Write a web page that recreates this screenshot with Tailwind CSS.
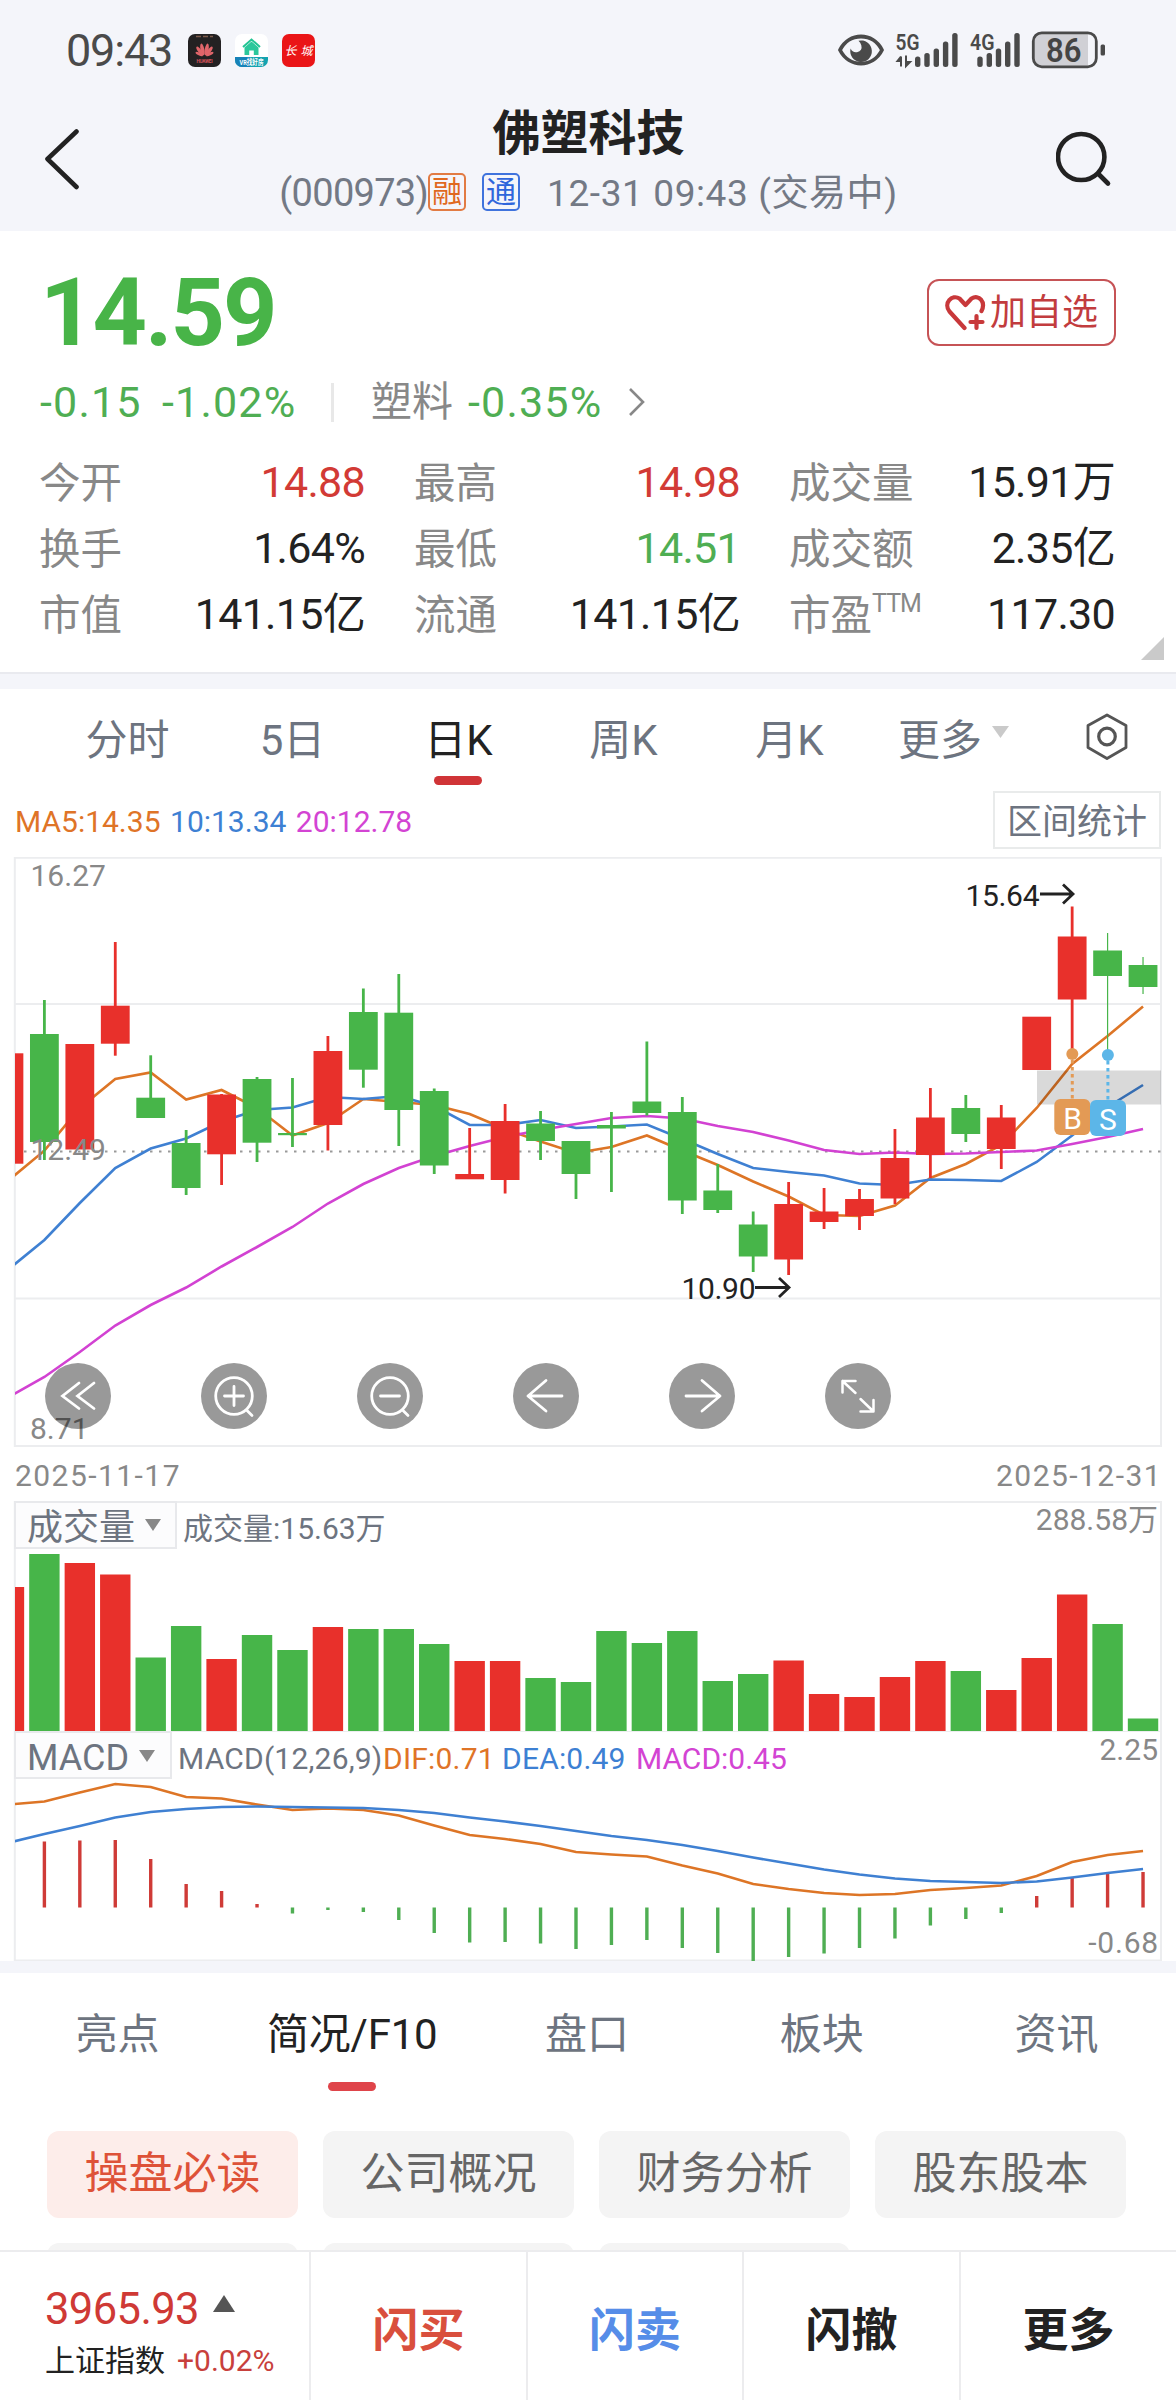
<!DOCTYPE html>
<html lang="zh-CN">
<head>
<meta charset="utf-8">
<title>佛塑科技 000973</title>
<script src="https://cdn.jsdelivr.net/npm/@tailwindcss/browser@4"></script>
</head>
<body class="bg-white">
<div class="w-[1176px] h-[2400px] overflow-hidden flex flex-col bg-white font-[Roboto,'Noto_Sans_CJK_SC',sans-serif] text-[#222] leading-none whitespace-nowrap">

  <!-- Status bar and title -->
  <header class="h-[231px] shrink-0 bg-[#f4f5fa] flex flex-col">
    <div class="h-[100px] flex items-center justify-between pl-[66px] pr-[70px]">
      <div class="flex items-center">
        <span class="w-[122px] text-[45px] tracking-[-1.2px] text-[#4a4a4a]">09:43</span>
        <svg class="w-[127px] h-[33px]" viewBox="0 0 127 33">
          <rect width="33" height="33" rx="7" fill="#232122"/>
          <path d="M8 2.5h17" stroke="#7d5b4b" stroke-width="1.4" stroke-dasharray="5 2"/>
          <g fill="#e0656a">
            <ellipse cx="14.4" cy="15.5" rx="1.9" ry="6" transform="rotate(-12 14.4 15.5)"/><ellipse cx="18.6" cy="15.5" rx="1.9" ry="6" transform="rotate(12 18.6 15.5)"/>
            <ellipse cx="11.8" cy="17" rx="1.7" ry="5.4" transform="rotate(-36 11.8 17)"/><ellipse cx="21.2" cy="17" rx="1.7" ry="5.4" transform="rotate(36 21.2 17)"/>
            <ellipse cx="11.2" cy="20" rx="1.4" ry="4" transform="rotate(-64 11.2 20)"/><ellipse cx="21.8" cy="20" rx="1.4" ry="4" transform="rotate(64 21.8 20)"/>
          </g>
          <text x="8.5" y="28.5" font-size="4.6" font-weight="700" textLength="16" fill="#d8555c">HUAWEI</text>
          <g transform="translate(47 0)">
            <rect width="33" height="33" rx="7" fill="#fff"/>
            <path d="M0 23h33v3a7 7 0 0 1-7 7H7a7 7 0 0 1-7-7z" fill="#14a3b0"/>
            <path d="M0 23h15v10H7a7 7 0 0 1-7-7z" fill="#1782b8"/>
            <path d="M8 13l8.500-7.500L25 13" fill="none" stroke="#22c493" stroke-width="2"/>
            <path d="M9.500 13.500l7-6 7 6V21h-4.700v-4.500h-4.600V21H9.500z" fill="#2cc79b"/>
            <text x="4.500" y="31" font-size="7.500" font-weight="700" textLength="24" lengthAdjust="spacingAndGlyphs" fill="#fff">VR找好房</text>
          </g>
          <g transform="translate(94 0)">
            <rect width="33" height="33" rx="7" fill="#ea1517"/>
            <text x="2.500" y="20.500" font-size="12" font-weight="400" font-style="italic" textLength="28" fill="#fff">长城</text>
          </g>
        </svg>
      </div>
      <svg class="w-[268px] h-[40px]" viewBox="838 29.500 268 40" fill="none">
        <g fill="#4a4a4a">
          <path d="M840 49.500C849 31.500 873 31.500 882 49.500C873 67.500 849 67.500 840 49.500Z" fill="none" stroke="#4a4a4a" stroke-width="3.800" stroke-linejoin="round"/>
          <path d="M858.500 40.200A10.800 10.800 0 1 1 850.600 48q2 4.500 6.400 3.700q5.800-1.700 4.300-7q-.8-3-2.800-4.500z"/>
          <text x="895.500" y="49" font-size="22" font-weight="600" textLength="24" lengthAdjust="spacingAndGlyphs">5G</text>
          <path d="M901 56v10M901 56l-3.500 4.500h3.500M906 55v10.500l4-4h-4" stroke="#4a4a4a" stroke-width="2"/>
          <rect x="915" y="56" width="5.400" height="10.500" rx="2.500"/><rect x="924.300" y="52.500" width="5.400" height="14" rx="2.500"/><rect x="933.600" y="48" width="5.400" height="18.500" rx="2.500"/><rect x="942.900" y="41" width="5.400" height="25.500" rx="2.500"/><rect x="952.200" y="32.500" width="5.400" height="34" rx="2.500"/>
          <text x="970" y="49" font-size="22" font-weight="600" textLength="24.500" lengthAdjust="spacingAndGlyphs">4G</text>
          <rect x="977.300" y="56" width="5.400" height="10.500" rx="2.500"/><rect x="986.600" y="52.500" width="5.400" height="14" rx="2.500"/><rect x="995.800" y="48" width="5.400" height="18.500" rx="2.500"/><rect x="1005" y="41" width="5.400" height="25.500" rx="2.500"/><rect x="1014.300" y="32.500" width="5.400" height="34" rx="2.500"/>
        </g>
        <path d="M1041 32h47v35h-47a8 8 0 0 1-8-8V40a8 8 0 0 1 8-8z" fill="#d0d0d5"/>
        <rect x="1033.300" y="32.300" width="63" height="34" rx="8.500" stroke="#4a4a4a" stroke-width="2.800"/>
        <rect x="1100.600" y="44" width="4.400" height="11" rx="1.500" fill="#4a4a4a"/>
        <text x="1046" y="61" font-size="33" font-weight="600" textLength="35.500" lengthAdjust="spacingAndGlyphs" fill="#444">86</text>
      </svg>
    </div>
    <div class="h-[131px] flex justify-between pl-[44px] pr-[64px]">
      <svg class="w-[36px] h-[62px] mt-[28px]" viewBox="44 128 36 62" fill="none" stroke="#222" stroke-width="4.600" stroke-linecap="round" stroke-linejoin="round"><path d="M76.500 131.500L47.500 159l29 28"/></svg>
      <div class="flex flex-col items-center ml-[41px]">
        <h1 class="mt-[9px] h-[54px] text-[48px] font-bold leading-[50px]">佛塑科技</h1>
        <div class="flex items-center h-[60px] text-[37px] text-[#737985]">
          <span class="text-[38px] tracking-[-0.700px]">(000973)</span>
          <span class="w-[38px] h-[38px] mb-[2px] border-2 border-[#e27b43] rounded-[5px] text-[#e0691f] text-[30px] leading-[34px] flex justify-center">融</span>
          <span class="w-[38px] h-[38px] mb-[2px] ml-[16px] border-2 border-[#3f73dd] rounded-[5px] text-[#2f66dc] text-[30px] leading-[34px] flex justify-center">通</span>
          <span class="ml-[27px] tracking-[0.600px]">12-31 09:43 (交易中)</span>
        </div>
      </div>
      <svg class="w-[56px] h-[60px] mt-[28px]" viewBox="1056 128 56 60" fill="none" stroke="#222" stroke-width="4.600" stroke-linecap="round"><ellipse cx="1081.200" cy="157" rx="23.200" ry="23"/><path d="M1098.500 174l9.500 9.500"/></svg>
    </div>
  </header>

  <!-- Quote -->
  <section class="relative h-[441px] shrink-0 pl-[40px] pr-[60px]">
    <div class="h-[136px] flex items-center justify-between">
      <div class="text-[95px] font-bold text-[#48b448] tracking-[-2px] mt-[26px]">14.59</div>
      <div class="w-[189px] h-[67px] mt-[27px] border-2 border-[#c65356] rounded-[12px] flex items-center pl-[15px] text-[36px] text-[#c23c3e]">
        <svg class="w-[42px] h-[37px]" viewBox="0 0 42 37" fill="none" stroke="#c8383a" stroke-width="4.200" stroke-linecap="round" stroke-linejoin="round"><path d="M20.500 34L5.500 17.500C-1 9 8 0 15.500 4.500L21.500 11L27.500 4.500C35 0 42 8 37.500 17"/><path d="M32.500 22v12M26.500 28h12"/></svg>
        <span class="ml-[4px]">加自选</span>
      </div>
    </div>
    <div class="h-[70px] flex items-center text-[43px] text-[#4fae53]">
      <span class="w-[122px] tracking-[1.200px]">-0.15</span>
      <span class="w-[169px] tracking-[1.200px]">-1.02%</span>
      <span class="w-[3px] h-[39px] bg-[#e8e8e8]"></span>
      <span class="ml-[37px] w-[97px] text-[41px] text-[#888]">塑料</span>
      <span class="w-[160px] tracking-[1.200px]">-0.35%</span>
      <svg class="w-[18px] h-[30px]" viewBox="0 0 18 30" fill="none" stroke="#888" stroke-width="2.600"><path d="M2 2l13 13L2 28"/></svg>
    </div>
    <div class="mt-[13px] grid grid-cols-3 gap-x-[50px] auto-rows-[66px] items-center w-[1075px] text-[43px] tracking-[-0.700px]">
      <div class="flex justify-between"><span class="-ml-[1px] pt-[2px] text-[41.500px] tracking-[0px] text-[#888]">今开</span><span class="text-[#d23a35]">14.88</span></div>
      <div class="flex justify-between"><span class="-ml-[1px] pt-[2px] text-[41.500px] tracking-[0px] text-[#888]">最高</span><span class="text-[#d23a35]">14.98</span></div>
      <div class="flex justify-between"><span class="-ml-[1px] pt-[2px] text-[41.500px] tracking-[0px] text-[#888]">成交量</span><span>15.91万</span></div>
      <div class="flex justify-between"><span class="-ml-[1px] pt-[2px] text-[41.500px] tracking-[0px] text-[#888]">换手</span><span>1.64%</span></div>
      <div class="flex justify-between"><span class="-ml-[1px] pt-[2px] text-[41.500px] tracking-[0px] text-[#888]">最低</span><span class="text-[#4fae53]">14.51</span></div>
      <div class="flex justify-between"><span class="-ml-[1px] pt-[2px] text-[41.500px] tracking-[0px] text-[#888]">成交额</span><span>2.35亿</span></div>
      <div class="flex justify-between"><span class="-ml-[1px] pt-[2px] text-[41.500px] tracking-[0px] text-[#888]">市值</span><span>141.15亿</span></div>
      <div class="flex justify-between"><span class="-ml-[1px] pt-[2px] text-[41.500px] tracking-[0px] text-[#888]">流通</span><span>141.15亿</span></div>
      <div class="flex justify-between"><span class="-ml-[1px] pt-[2px] flex text-[41.500px] tracking-[0px] text-[#888]">市盈<span class="text-[25px] tracking-[-1px] -mt-[4px]">TTM</span></span><span>117.30</span></div>
    </div>
    <svg class="absolute right-[12px] bottom-[12px] w-[23px] h-[23px]" viewBox="0 0 23 23"><path d="M23 0v23H0z" fill="#cacaca"/></svg>
  </section>
  <div class="h-[17px] shrink-0 bg-[#f4f5fa] border-t-2 border-[#e9eaef]"></div>

  <!-- Period tabs -->
  <nav class="h-[98px] shrink-0 flex pl-[45px] text-[42px] text-[#6d7480]">
    <div class="w-[165px] pt-[31px] text-center">分时</div>
    <div class="w-[165px] pt-[31px] text-center">5日</div>
    <div class="w-[165px] pt-[31px] flex flex-col items-center text-[#222]"><span class="ml-[2px]">日K</span><span class="mt-[14px] w-[48px] h-[9px] rounded-full bg-[#d03437]"></span></div>
    <div class="w-[167px] pt-[31px] text-center">周K</div>
    <div class="w-[165px] pt-[31px] text-center">月K</div>
    <div class="pt-[31px] ml-[26px] flex">更多<svg class="ml-[10px] mt-[6px] w-[17px] h-[12px]" viewBox="0 0 17 12"><path d="M0 0h17L8.500 12z" fill="#cacaca"/></svg></div>
    <svg class="ml-[77px] mt-[24px] w-[42px] h-[47px]" viewBox="0 0 42 47" fill="none" stroke="#555" stroke-width="2.800" stroke-linejoin="round"><path d="M21 2l19 10.500v22L21 45.500 2 34.500v-22z"/><circle cx="21" cy="23.500" r="8.300" stroke-width="3.200"/></svg>
  </nav>

  <!-- Moving averages legend -->
  <div class="h-[70px] shrink-0 flex items-start justify-between pl-[15px] pr-[15px] text-[30px]">
    <div class="flex gap-[9.500px] mt-[19.500px]"><span class="text-[#df7427]">MA5:14.35</span><span class="text-[#3d80d3]">10:13.34</span><span class="text-[#d344d3]">20:12.78</span></div>
    <div class="mt-[4px] w-[168px] h-[58px] border-2 border-[#e9ebeb] text-[35px] text-[#6d7480] text-center leading-[59px]">区间统计</div>
  </div>

  <!-- Candlestick chart -->
  <div class="relative h-[590px] shrink-0">
    <svg class="block w-[1176px] h-[590px]" viewBox="0 857 1176 590" font-size="30">
      <defs><clipPath id="frame"><rect x="15" y="857" width="1146" height="1105"/></clipPath></defs>
      <g fill="none" stroke="#ecedef" stroke-width="2">
        <path d="M14.800 857.700H1161V1446H14.800z"/><path d="M15 1004H1161M15 1298.500H1161"/>
      </g>
      <path d="M15 1151.500H1161" stroke="#999" stroke-width="2" stroke-dasharray="2.500 6.500"/>
      <g id="k" clip-path="url(#frame)"></g>
      <rect x="1037" y="1070.500" width="124" height="34" fill="#000" fill-opacity="0.150"/>
      <g stroke-width="3" stroke-dasharray="3.500 3.500"><path d="M1072.300 1060v39" stroke="#e39a55"/><path d="M1107.900 1061v39" stroke="#5cb6e8"/></g>
      <circle cx="1072.300" cy="1054" r="6" fill="#e39a55"/><circle cx="1107.900" cy="1055" r="6" fill="#5cb6e8"/>
      <rect x="1054.300" y="1099" width="36" height="36" rx="6" fill="#e39a55"/><rect x="1090" y="1100" width="36" height="36" rx="6" fill="#5cb6e8"/>
      <g fill="#fff" text-anchor="middle"><text x="1072.500" y="1128.500">B</text><text x="1108" y="1129.500">S</text></g>
      <g fill="#888"><text x="30.500" y="886">16.27</text><text x="30.500" y="1160">12.49</text><text x="30" y="1439">8.71</text></g>
      <g fill="#222"><text x="965.500" y="905.500" textLength="74">15.64</text><text x="681.500" y="1298.500" textLength="74">10.90</text></g>
      <g fill="none" stroke="#222" stroke-width="2.800"><path d="M1040 894h33M1063 884.500l10 9.500-10 9.500M755 1287.500h34M779 1278l10 9.500-10 9.500"/></g>
    </svg>
    <div class="absolute left-[45px] top-[506px] flex gap-[90px]">
      <div class="w-[66px] h-[66px] rounded-full bg-black/40"><svg viewBox="0 0 66 66" fill="none" stroke="#fff" stroke-width="2.800" stroke-linecap="round"><path d="M34 20L17.500 33 34 45.500M49 20L32.500 33 49 45.500"/></svg></div>
      <div class="w-[66px] h-[66px] rounded-full bg-black/40"><svg viewBox="0 0 66 66" fill="none" stroke="#fff" stroke-width="2.800" stroke-linecap="round"><circle cx="33" cy="33" r="18.300"/><path d="M33 23.500v19M23.500 33h19M46 47.500l5 5"/></svg></div>
      <div class="w-[66px] h-[66px] rounded-full bg-black/40"><svg viewBox="0 0 66 66" fill="none" stroke="#fff" stroke-width="2.800" stroke-linecap="round"><circle cx="33" cy="33" r="18.300"/><path d="M23.500 33h19M46 47.500l5 5"/></svg></div>
      <div class="w-[66px] h-[66px] rounded-full bg-black/40"><svg viewBox="0 0 66 66" fill="none" stroke="#fff" stroke-width="2.800" stroke-linecap="round" stroke-linejoin="round"><path d="M33 17.500L15 33l18 15M15 33h34"/></svg></div>
      <div class="w-[66px] h-[66px] rounded-full bg-black/40"><svg viewBox="0 0 66 66" fill="none" stroke="#fff" stroke-width="2.800" stroke-linecap="round" stroke-linejoin="round"><path d="M33 17.500L51 33 33 48M51 33H17"/></svg></div>
      <div class="w-[66px] h-[66px] rounded-full bg-black/40"><svg viewBox="0 0 66 66" fill="none" stroke="#fff" stroke-width="2.500" stroke-linecap="round" stroke-linejoin="round"><path d="M17.500 29.500V18H30.500M17.500 18l13 12M48.500 37v11.500H35.500M48.500 48.500L35.500 36"/></svg></div>
    </div>
  </div>
  <div class="h-[54px] shrink-0 flex justify-between pl-[15px] pr-[14px] pt-[14px] text-[30px] text-[#888] tracking-[1.450px]"><span>2025-11-17</span><span>2025-12-31</span></div>

  <!-- Volume -->
  <div class="relative h-[230px] shrink-0">
    <svg class="block w-[1176px] h-[230px]" viewBox="0 1501 1176 230"><path d="M14.800 1731V1502H1161V1731" fill="none" stroke="#ecedef" stroke-width="2"/><g id="v" clip-path="url(#frame)"></g></svg>
    <div class="absolute inset-x-0 top-0 pl-[14px] pr-[18px] flex justify-between items-start text-[30px]">
      <div class="flex">
        <div class="w-[163px] h-[48px] border-2 border-[#e8e9ec] bg-[#fcfcfd] flex pl-[11px] pt-[7px] text-[36px] text-[#6d7480]">成交量<svg class="ml-[10px] mt-[9px] w-[16px] h-[12px]" viewBox="0 0 16 12"><path d="M0 0h16L8 12z" fill="#888"/></svg></div>
        <span class="ml-[6px] mt-[13px] text-[#6d7480]">成交量:15.63万</span>
      </div>
      <span class="mt-[4px] text-[#888]">288.58万</span>
    </div>
  </div>

  <!-- MACD -->
  <div class="relative h-[230px] shrink-0">
    <svg class="block w-[1176px] h-[230px]" viewBox="0 1731 1176 230"><path d="M14.800 1731H1161V1960.500H14.800z" fill="none" stroke="#ecedef" stroke-width="2"/><g id="m" clip-path="url(#frame)"></g></svg>
    <div class="absolute inset-x-0 top-0 pl-[14px] pr-[18px] flex justify-between items-start text-[30px]">
      <div class="flex">
        <div class="w-[158px] h-[48px] border-2 border-[#e8e9ec] bg-[#fcfcfd] flex pl-[11px] pt-[7px] text-[36px] text-[#6d7480]">MACD<svg class="ml-[10px] mt-[10px] w-[16px] h-[12px]" viewBox="0 0 16 12"><path d="M0 0h16L8 12z" fill="#888"/></svg></div>
        <span class="w-[211px] pl-[6px] mt-[13px] tracking-[0.200px] text-[#6d7480]">MACD(12,26,9)</span>
        <span class="w-[119px] mt-[13px] tracking-[0.200px] text-[#df7427]">DIF:0.71</span>
        <span class="w-[134px] mt-[13px] tracking-[0.200px] text-[#3d80d3]">DEA:0.49</span>
        <span class="mt-[13px] text-[#d344d3]">MACD:0.45</span>
      </div>
      <div class="flex flex-col items-end text-[#888]"><span class="mt-[4px]">2.25</span><span class="mt-[163px] tracking-[0.800px] -mr-[1px]">-0.68</span></div>
    </div>
  </div>
  <div class="h-[12px] shrink-0 bg-[#f4f5fa]"></div>

  <!-- Information tabs -->
  <nav class="h-[158px] shrink-0 grid grid-cols-5 pr-[2px] pt-[41px] text-[42px] text-[#6d7480] text-center">
    <div>亮点</div>
    <div class="flex flex-col items-center text-[#222]"><span class="tracking-[-0.200px]">简况/F10</span><span class="mt-[26px] w-[48px] h-[9px] rounded-full bg-[#df444a]"></span></div>
    <div>盘口</div><div>板块</div><div>资讯</div>
  </nav>
  <section class="h-[119px] shrink-0 overflow-hidden grid grid-cols-[repeat(4,251px)] gap-x-[25px] gap-y-[25px] auto-rows-[87px] pl-[47px] text-[44px] leading-[87px] text-[#666] text-center">
    <div class="rounded-[12px] bg-[#fdedea] text-[#de5238]">操盘必读</div>
    <div class="rounded-[12px] bg-[#f4f4f4]">公司概况</div>
    <div class="rounded-[12px] bg-[#f4f4f4]">财务分析</div>
    <div class="rounded-[12px] bg-[#f4f4f4]">股东股本</div>
    <div class="rounded-[12px] bg-[#f4f4f4]"></div>
    <div class="rounded-[12px] bg-[#f4f4f4]"></div>
    <div class="rounded-[12px] bg-[#f4f4f4]"></div>
  </section>

  <!-- Trade bar -->
  <footer class="h-[150px] shrink-0 border-t-2 border-[#ececee] grid grid-cols-[309px_217px_216px_217px_217px] text-[46px] font-bold">
    <div class="pl-[45px] font-normal">
      <div class="flex mt-[36px] text-[43.500px] tracking-[-0.600px] text-[#cf3935]">3965.93<svg class="ml-[14px] mt-[7px] w-[22px] h-[17px]" viewBox="0 0 22 17"><path d="M11 0l11 17H0z" fill="#555"/></svg></div>
      <div class="flex mt-[14px] text-[30px]"><span class="w-[132px]">上证指数</span><span class="text-[#c8403c]">+0.02%</span></div>
    </div>
    <div class="border-l-2 border-[#ececee] flex items-center justify-center pt-[8px] text-[#d94f3d]">闪买</div>
    <div class="border-l-2 border-[#ececee] flex items-center justify-center pt-[8px] text-[#568de8]">闪卖</div>
    <div class="border-l-2 border-[#ececee] flex items-center justify-center pt-[8px]">闪撤</div>
    <div class="border-l-2 border-[#ececee] flex items-center justify-center pt-[8px]">更多</div>
  </footer>
</div>

<script>
const R = '#e8302b', G = '#47b549', STEP = 35.44, X0 = 8.95;
const cx = i => X0 + STEP * i;
// [color, wick top, wick bottom, body top, body bottom, volume top]
const candles = [
  [R,1053,1163,1053.3,1163.7,1587],[G,1000,1160,1034,1142,1554],[R,1044,1149,1044,1149.5,1563],[R,942,1055.700,1005.700,1043.700,1574.500],
  [G,1055.300,1118,1097.700,1118,1657.500],[G,1130,1195,1143,1188,1626],[R,1094,1185,1094.500,1154.300,1659],[G,1077,1162,1079,1142.700,1635],
  [G,1078,1147,1133,1135.200,1650],[R,1036,1150.500,1051,1125,1627],[G,988.500,1087.700,1012,1069.700,1629],[G,974,1146,1012.700,1110,1629],
  [G,1088.500,1174,1091,1165.500,1644],[R,1128,1179,1174,1179.300,1661],[R,1104,1193.500,1121,1180,1661],[G,1111,1160,1123.500,1141,1678],
  [G,1141,1199,1141,1174,1682],[G,1112,1192,1125,1128.500,1631],[G,1041.500,1115.500,1101.500,1113,1643],[G,1097,1214,1112,1200.500,1631],
  [G,1164,1213,1190.500,1210,1681],[G,1211.500,1272,1224.500,1256.500,1674],[R,1182,1275,1204,1259.500,1660.500],[R,1188,1229,1211.500,1222,1694],
  [R,1189,1230,1199,1216,1697],[R,1129,1204,1158,1198.500,1677],[R,1088,1178,1117.500,1155,1661],[G,1095,1142,1108,1134,1671],
  [R,1105,1169,1117.500,1149,1690],[R,1017,1070,1016.700,1070,1658],[R,906.500,1053,936.500,999.500,1594.500],[G,933,1050,950.500,976,1624],[G,957,994,965,987,1718.500]];
const ma5 = [1180,1150.700,1108,1079,1072.500,1099.500,1090,1108,1135.500,1123,1099,1102,1105,1114,1129,1141.500,1153,1147,1135.500,1150.500,1165,1181.500,1196.500,1215,1216,1205.500,1178,1164,1145,1108,1064,1036,1006.500];
const ma10 = [1269,1240,1203,1168,1148.500,1138.500,1121.500,1110,1107.500,1097,1099,1096,1106,1125,1125,1120,1128,1126.500,1124.500,1139,1154,1168,1172,1175.500,1183.500,1185,1179.500,1180,1181,1162,1135.500,1107,1085];
const ma20 = [1397,1377,1352,1325.500,1305,1287.500,1266.500,1247,1227,1203.500,1184,1168,1156,1146,1137,1130,1124,1118,1116,1118.500,1126,1132,1140.500,1150,1154,1152.500,1154,1153.500,1152,1150.500,1144,1137,1129];
const hist = [null,1841.500,1840.500,1840,1859,1884,1891,1904,1913.500,1910,1912,1920,1933,1942.500,1942,1943.500,1949,1945,1940,1948,1953,1961,1957,1953.500,1948,1938.500,1925.500,1919,1913,1896,1877,1872,1872];
const dif = [1804.500,1801.500,1792.500,1784,1787,1797,1798.500,1804.500,1810,1808.500,1810,1815.500,1825.500,1835,1839,1844,1852,1854.500,1856.500,1865.500,1873.500,1884,1889,1893,1895,1894,1890,1888,1885.500,1876,1862,1855,1851];
const dea = [1842.500,1834,1826,1817.500,1812,1809,1807,1806.500,1807,1807.500,1808,1810,1813,1817.500,1821.500,1826,1831,1836,1840,1845,1851,1857.500,1863.500,1869.500,1874.500,1878.500,1881,1882,1883,1881.500,1877.500,1873,1869];
const line = (ys, c) => `<polyline fill="none" stroke="${c}" stroke-width="2.600" points="${ys.map((y, i) => cx(i) + ',' + y).join(' ')}"/>`;
const rect = (x, y, w, h, c) => `<rect x="${x}" y="${y}" width="${w}" height="${h}" fill="${c}"/>`;
document.getElementById('k').innerHTML =
  line(ma5, '#dd7526') + line(ma10, '#3f80d2') + line(ma20, '#d242d2') +
  candles.map(([c, a, b, t, u], i) => {
    const w = i > 30 ? 1.2 : 2.8;
    return rect(cx(i) - w / 2, a, w, b - a, c) + rect(cx(i) - 14.4, t, 28.8, u - t, c);
  }).join('');
document.getElementById('v').innerHTML = candles.map((d, i) => rect(cx(i) - 15.2, d[5], 30.4, 1731 - d[5], d[0])).join('');
document.getElementById('m').innerHTML =
  hist.map((y, i) => y === null ? '' : rect(cx(i) - 1.7, Math.min(y, 1907.5), 3.4, Math.abs(y - 1907.5), y < 1907.5 ? '#cf3b37' : '#4fae53')).join('') +
  line(dif, '#dd7526') + line(dea, '#3f80d2');
</script>
</body>
</html>
